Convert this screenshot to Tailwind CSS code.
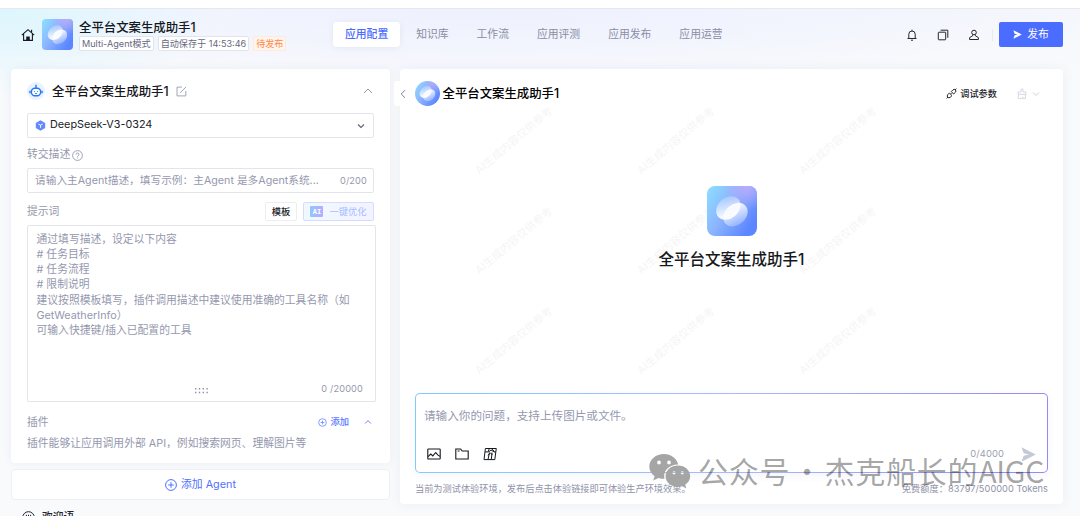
<!DOCTYPE html>
<html lang="zh-CN">
  <head>
    <meta charset="UTF-8" />
    <meta name="viewport" content="width=device-width, initial-scale=1.0" />
    <title>全平台文案生成助手1</title>
    <script src="https://cdn.jsdelivr.net/npm/@tailwindcss/browser@4"></script>
  </head>
  <body
    class="h-[516px] overflow-hidden flex flex-col bg-[#f8f9fc] font-[Inter,'Noto_Sans_CJK_SC',sans-serif] text-[10.8px] leading-4 text-[#9598ae]"
  >
    <!-- Shared gradients and the app logo -->
    <svg class="absolute w-0 h-0" aria-hidden="true">
      <defs>
        <linearGradient id="logoBase" x1="0" y1="0.1" x2="1" y2="0.7">
          <stop offset="0" stop-color="#8cdcff" />
          <stop offset="0.45" stop-color="#8bb3fe" />
          <stop offset="0.95" stop-color="#5b86ff" />
        </linearGradient>
        <radialGradient id="logoGlow" cx="0.8" cy="0" r="0.48">
          <stop offset="0" stop-color="#b9abfb" />
          <stop offset="1" stop-color="#b9abfb" stop-opacity="0" />
        </radialGradient>
        <linearGradient id="logoLeft" x1="0.8" y1="0" x2="0.2" y2="1">
          <stop offset="0" stop-color="#fff" stop-opacity="0.15" />
          <stop offset="0.75" stop-color="#fff" stop-opacity="0.9" />
        </linearGradient>
        <linearGradient id="logoRight" x1="0.8" y1="0" x2="0.2" y2="1">
          <stop offset="0.1" stop-color="#fff" stop-opacity="0.9" />
          <stop offset="1" stop-color="#fff" stop-opacity="0.2" />
        </linearGradient>
      </defs>
      <symbol id="logo" viewBox="0 0 50 50">
        <rect width="50" height="50" fill="url(#logoBase)" />
        <rect width="50" height="50" fill="url(#logoGlow)" />
        <ellipse cx="21.3" cy="22" rx="13.5" ry="10.3" transform="rotate(-42 21.3 22)" fill="url(#logoLeft)" />
        <ellipse cx="28.5" cy="28.700" rx="13.5" ry="10.3" transform="rotate(-42 28.5 28.7)" fill="url(#logoRight)" />
      </symbol>
    </svg>

    <div class="h-[9px] shrink-0 bg-white border-b-[1.5px] border-[#e6e8ed]"></div>

    <div
      class="flex-1 min-h-0 flex flex-col bg-[radial-gradient(ellipse_220px_90px_at_0_0,#dcf6fd,transparent),radial-gradient(ellipse_620px_75px_at_45%_0,#eef1fe,transparent),linear-gradient(#f5f7fd,#f9fafc_60px)]"
    >
      <!-- Header -->
      <header class="h-[60px] shrink-0 flex items-start pl-[21px] pr-[17px]">
        <div class="w-[312px] flex items-center pt-[9px]">
          <svg class="w-[14px] h-[14px] mr-[7px] text-[#16181d]" viewBox="0 0 14 14" fill="none" stroke="currentColor" stroke-width="1.1">
            <path d="M0.8 7.2 7 1.7l6.2 5.5M2.6 6v6.4h8.8V6" />
            <path d="M5.8 12.2V9h2.4v3.2z" fill="currentColor" />
            <path d="M10.6 1.8v2.4" />
          </svg>
          <svg class="size-[31px] rounded-[4px]"><use href="#logo" /></svg>
          <div class="ml-[6px]">
            <h1 class="pt-px text-[12.4px] leading-[17px] font-medium text-[#16181d]">
              全平台文案生成助手1
            </h1>
            <div class="flex gap-1 text-[9.1px] leading-[13px] text-[#666a80] whitespace-nowrap">
              <span class="px-[2px] bg-white border border-[#e1e3ee] rounded-[2px]">Multi-Agent模式</span>
              <span class="px-[2px] bg-white border border-[#e1e3ee] rounded-[2px]">自动保存于 14:53:46</span>
              <span class="px-[2px] bg-[#fff5ec] border border-[#ffeadb] rounded-[2px] text-[#ff8748]">待发布</span>
            </div>
          </div>
        </div>
        <nav class="flex gap-1 pt-[13px] leading-[24px] text-[#8a8da5]">
          <a class="px-3 pt-px bg-white rounded-[4px] shadow-[0_1px_6px_rgba(80,90,140,0.09)] font-medium text-[#4a6bff]">应用配置</a>
          <a class="px-3 pt-px">知识库</a>
          <a class="px-3 pt-px">工作流</a>
          <a class="px-3 pt-px">应用评测</a>
          <a class="px-3 pt-px">应用发布</a>
          <a class="px-3 pt-px">应用运营</a>
        </nav>
        <div class="ml-auto flex items-center pt-[13px] text-[#25272e]">
          <svg class="size-3" viewBox="0 0 12 12" fill="none" stroke="currentColor">
            <path d="M1.5 9.5h9M2.8 9.3V5.2a3.2 3.2 0 0 1 6.4 0v4.1M6 0.7v1.2M5 11.2h2" />
          </svg>
          <svg class="size-3 ml-[19px]" viewBox="0 0 12 12" fill="none" stroke="currentColor">
            <rect x="1.3" y="3.2" width="7.4" height="7.6" rx="0.6" />
            <path d="M3.6 1.2h7.2v7.6" />
          </svg>
          <svg class="size-3 ml-[19px]" viewBox="0 0 12 12" fill="none" stroke="currentColor">
            <circle cx="6" cy="3.5" r="2.3" />
            <path d="M4.6 5.6v1.2L1.6 8.600v1.900h8.800V8.600l-3-1.800V5.600" />
          </svg>
          <div class="w-px h-3 bg-[#e7e9f1] ml-3 mr-[6px]"></div>
          <button class="w-[64px] h-[25px] flex items-center justify-center gap-[5px] rounded-[2px] bg-[#4a6cff] text-white">
            <svg class="w-[9px] h-[9px]" viewBox="0 0 9 9" fill="currentColor">
              <path d="M0.4 0.3 8.8 4.5 0.4 8.7 1.6 5.2 4.6 4.5 1.6 3.8z" />
            </svg>
            <span class="pt-px">发布</span>
          </button>
        </div>
      </header>

      <main class="flex-1 min-h-0 flex gap-[10px] pl-[11px] pr-[17px]">
        <!-- Agent settings -->
        <div class="w-[379px] shrink-0 flex flex-col">
          <section class="h-[394px] shrink-0 bg-white rounded-[4px] shadow-[0_0_10px_rgba(80,90,140,0.08)] pl-4 pr-[15px]">
            <div class="h-[44px] flex items-center">
              <span class="size-[18px] rounded-full bg-[#e9f2ff] flex items-center justify-center">
                <svg class="size-[14px]" viewBox="0 0 14 14" fill="none" stroke="#2478f5" stroke-width="1.4">
                  <rect x="2.4" y="4.3" width="9.2" height="7.4" rx="3.5" fill="#fff" />
                  <path d="M7 4.2V1.4M1 6.7v2.6M13 6.7v2.6" />
                  <path d="M4.9 7.5h1M8.1 7.5h1M5.9 9.3q1.1.8 2.2 0" stroke-width="0.9" />
                  <circle cx="7" cy="1.3" r="0.7" fill="#2478f5" stroke="none" />
                </svg>
              </span>
              <h2 class="ml-[7px] pt-px text-[12.4px] font-medium text-[#16181d]">全平台文案生成助手1</h2>
              <svg class="size-[11px] ml-[7px]" viewBox="0 0 11 11" fill="none" stroke="#a2a5b8">
                <path d="M6 1.1H1v8.8h8.8V5M4.2 6.8 10 1" />
              </svg>
              <svg class="size-[10px] ml-auto mr-[2px]" viewBox="0 0 10 10" fill="none" stroke="#9699ae">
                <path d="M1.1 7 5 3l3.9 4" />
              </svg>
            </div>
            <div class="w-[347px] h-[25px] flex items-center px-[7px] border border-[#e4e5ea] rounded-[2px] text-[#202228]">
              <svg class="size-[11px] mr-1" viewBox="0 0 11 11">
                <path d="M5.5 0.3 10.2 2.9v5.2L5.5 10.7 0.8 8.1V2.9z" fill="#6389fb" />
                <path d="M3.300 4 5.5 5.2 7.700 4M5.5 5.2v2.600" fill="none" stroke="#fff" stroke-width="0.9" />
              </svg>
              <span class="pb-px text-[10.8px]">DeepSeek-V3-0324</span>
              <svg class="size-2 ml-auto mr-px" viewBox="0 0 8 8" fill="none" stroke="#5d6070" stroke-width="1.1">
                <path d="M1 2.5l3 3 3-3" />
              </svg>
            </div>
            <div class="h-[30px] pt-[4px] flex items-center gap-[2px]">
              转交描述
              <svg class="size-[11px]" viewBox="0 0 11 11" fill="none" stroke="currentColor" stroke-width="0.9">
                <circle cx="5.5" cy="5.5" r="4.9" />
                <path d="M4 4.5a1.5 1.5 0 1 1 2.2 1.3Q5.5 6.1 5.5 6.8M5.5 7.5v.9" />
              </svg>
            </div>
            <div class="w-[347px] h-[25px] flex items-center pl-[7px] pr-[6px] pt-px border border-[#e4e5ea] rounded-[2px] whitespace-nowrap">
              <span class="text-[10.7px]">请输入主Agent描述，填写示例：主Agent 是多Agent系统...</span>
              <span class="ml-auto text-[9.2px] tracking-[0.15px]">0/200</span>
            </div>
            <div class="w-[347px] h-8 pt-[5px] flex items-center">
              <span class="pt-px">提示词</span>
              <button class="ml-auto w-8 h-[19px] leading-[17px] text-center border border-[#eceef3] rounded-[2px] text-[9.3px] font-medium text-[#202228]">模板</button>
              <button class="ml-[6px] w-[71px] h-[19px] flex items-center justify-center gap-[6px] border border-[#d5dcff] rounded-[2px] bg-linear-to-r from-[#f0f8ff] to-[#f3f3ff] text-[9.3px] text-[#a6bdff]">
                <span class="w-[13px] h-[11px] rounded-[1px] bg-linear-to-r from-[#91c5ff] to-[#b3acff] font-['Liberation_Mono'] text-[7px] leading-[12px] font-bold text-white">AI</span>
                一键优化
              </button>
            </div>
            <div class="relative w-[349px] h-[177px] pt-[6px] px-[8.5px] border border-[#e4e5ea] rounded-[2px] leading-[15.15px] whitespace-nowrap">
              通过填写描述，设定以下内容<br />
              # 任务目标<br />
              # 任务流程<br />
              # 限制说明<br />
              建议按照模板填写，插件调用描述中建议使用准确的工具名称（如<br />
              GetWeatherInfo）<br />
              可输入快捷键/插入已配置的工具
              <svg class="absolute left-[167px] bottom-[7px] w-[13px] h-[6px]" viewBox="0 0 13 6" fill="#8f92a6">
                <path d="M0 0h1.4v1.4H0zM3.8 0h1.4v1.4H3.8zM7.6 0H9v1.4H7.6zM11.4 0h1.4v1.4h-1.4zM0 3.8h1.4v1.4H0zM3.8 3.8h1.4v1.4H3.8zM7.6 3.8H9v1.4H7.6zM11.4 3.8h1.4v1.4h-1.4z" />
              </svg>
              <span class="absolute right-3 bottom-[5px] text-[9.2px] tracking-[0.15px]">0 /20000</span>
            </div>
            <div class="flex items-center h-4 mt-3">
              <span class="pt-px">插件</span>
              <svg class="size-[9px] ml-auto mr-[3px]" viewBox="0 0 9 9" fill="none" stroke="#6a86ff" stroke-width="0.8">
                <circle cx="4.5" cy="4.5" r="3.8" />
                <path d="M4.5 2.6v3.8M2.6 4.5h3.8" />
              </svg>
              <span class="text-[9.3px] font-medium text-[#5b78ff]">添加</span>
              <svg class="size-2 ml-[15px] mr-[3px]" viewBox="0 0 8 8" fill="none" stroke="#6a86ff">
                <path d="M1.2 5.5 4 2.6l2.8 2.9" />
              </svg>
            </div>
            <p class="mt-[6px]">插件能够让应用调用外部 API，例如搜索网页、理解图片等</p>
          </section>

          <button class="mt-[6px] h-[31px] shrink-0 flex items-center justify-center gap-1 bg-white border border-[#eff0f5] rounded-[4px] text-[#4f70ff]">
            <svg class="size-3" viewBox="0 0 12 12" fill="none" stroke="currentColor">
              <circle cx="6" cy="6" r="5.4" />
              <path d="M6 3.2v5.6M3.2 6h5.6" />
            </svg>
            <span>添加 Agent</span>
          </button>

          <div class="mt-[8px] h-[18px] shrink-0 flex items-center pl-[11px] pr-[15px] text-[#202228]">
            <svg class="size-[13px]" viewBox="0 0 13 13" fill="none" stroke="currentColor">
              <circle cx="6.5" cy="6.5" r="5.8" />
              <path d="M4.4 3.8v1.4M6.5 3.8v1.4M8.6 3.8v1.4M3.8 7.6q2.7 3 5.4 0" />
            </svg>
            <span class="ml-[7px] mt-[2px] text-[10.8px] font-medium">欢迎语</span>
            <svg class="size-[10px] ml-auto mt-[3px]" viewBox="0 0 10 10" fill="none" stroke="#9699ae">
              <path d="M1.1 3 5 7l3.9-4" />
            </svg>
          </div>
        </div>

        <!-- Chat preview -->
        <section class="relative flex-1 h-[435px] flex flex-col bg-white rounded-[4px] shadow-[0_0_12px_rgba(80,90,140,0.08)] px-[15px]">
          <button class="absolute -left-[6px] top-3 w-3 h-[25px] flex items-center justify-center bg-white rounded-[3px]">
            <svg class="w-[6px] h-[10px] ml-[6px]" viewBox="0 0 6 10" fill="none" stroke="#7f8296">
              <path d="M5 1.2 1.2 5 5 8.8" />
            </svg>
          </button>

          <!-- Tiled watermark behind the conversation -->
          <div class="absolute left-[33px] top-[22px] grid grid-cols-[repeat(3,162.3px)] auto-rows-[100px] place-items-center text-[10.8px] text-[#f5f5f6] whitespace-nowrap">
            <span class="-rotate-40">AI生成内容仅供参考</span>
            <span class="-rotate-40">AI生成内容仅供参考</span>
            <span class="-rotate-40">AI生成内容仅供参考</span>
            <span class="-rotate-40">AI生成内容仅供参考</span>
            <span class="-rotate-40">AI生成内容仅供参考</span>
            <span class="-rotate-40">AI生成内容仅供参考</span>
            <span class="-rotate-40">AI生成内容仅供参考</span>
            <span class="-rotate-40">AI生成内容仅供参考</span>
            <span class="-rotate-40">AI生成内容仅供参考</span>
          </div>

          <div class="h-[49px] shrink-0 flex items-center">
            <svg class="size-[25px] rounded-full"><use href="#logo" /></svg>
            <h2 class="ml-[2.5px] pt-px text-[12.4px] font-medium text-black">全平台文案生成助手1</h2>
            <svg class="size-[11px] ml-auto mr-[3px]" viewBox="0 0 11 11" fill="none" stroke="#25272e">
              <path d="M0.6 10.4 2 9M9 2l1.4-1.4M5.3 3.5 7 1.8a1.8 1.8 0 0 1 2.4.1 1.8 1.8 0 0 1 0 2.4L7.6 6zM3.4 5 1.7 6.8a1.8 1.8 0 0 0 0 2.4 1.8 1.8 0 0 0 2.5.1L6 7.6zM4.5 6.1l1-1" />
            </svg>
            <span class="text-[9.2px] font-medium text-[#25272e]">调试参数</span>
            <svg class="w-[10px] h-[11px] ml-5" viewBox="0 0 10 11" fill="none" stroke="#d6d8e2">
              <path d="M4 4V1.3q1-1 2 0V4h3v2.4H1V4h3M1.7 6.6 1 10.4h7.6l-.4-3.8M5.9 8.6v1.8" />
            </svg>
            <svg class="size-2 ml-[5px] mr-2" viewBox="0 0 8 8" fill="none" stroke="#d0d2de">
              <path d="M1 2.5l3 3 3-3" />
            </svg>
          </div>

          <div class="relative flex-1 flex flex-col items-center pt-[68px]">
            <svg class="size-[50px] rounded-[8px]"><use href="#logo" /></svg>
            <h3 class="mt-3 text-[15.5px] leading-6 font-medium text-[#16181d]">全平台文案生成助手1</h3>
          </div>

          <div class="relative h-[80px] mb-[31px] shrink-0 rounded-[5px] p-px bg-linear-to-r from-[#7fcbfa] via-[#a9b9fb] to-[#9488f6] shadow-[0_3px_8px_rgba(80,100,180,0.06)]">
            <div class="h-full bg-white rounded-[4px] px-2 pt-[14px] flex flex-col">
              <p class="text-[11.6px]">请输入你的问题，支持上传图片或文件。</p>
              <div class="flex items-center mt-[22px] pl-[3px] text-[#16181d]">
                <svg class="size-[14px] mr-[14px]" viewBox="0 0 14 14" fill="none" stroke="currentColor" stroke-width="1.1">
                  <rect x="0.8" y="2" width="12.4" height="10" rx="0.6" />
                  <path d="M1 9.6 3.8 7l2 1.9 2.9-3.4 2 2.4L13 9.4" />
                </svg>
                <svg class="size-[14px] mr-[14px]" viewBox="0 0 14 14" fill="none" stroke="currentColor" stroke-width="1.1">
                  <path d="M0.8 12V2h4.8l1.6 2h6v8zM2.6 4h2" />
                </svg>
                <svg class="size-[14px]" viewBox="0 0 14 14" fill="none" stroke="currentColor">
                  <path d="M2.400 1.500h10.900l-.5 3.400-1 7.700H1zM2 4.900h3.200l1-3.200M5.500 5 8 3l3.500 2h1.300M8.500 1.600l3 3M6.500 5.500 5 12.500M9 5.500 8.300 12.500M4.800 8.300 7.500 6l2 2" />
                </svg>
                <span class="ml-auto text-[9.4px] tracking-[0.1px] text-[#9b9eb2]">0/4000</span>
                <svg class="w-[15px] h-[15px] ml-[17px] mr-[3px]" viewBox="0 0 15 15" fill="#c6c8d6">
                  <path d="M0.5 0.2 14.8 7.5 0.5 14.8 2.7 8.7 8 7.5 2.7 6.3z" />
                </svg>
              </div>
            </div>
          </div>
          <div class="absolute left-[15px] right-[15px] bottom-[7px] flex justify-between text-[9.2px] text-[#8f92a8]">
            <span>当前为测试体验环境，发布后点击体验链接即可体验生产环境效果。</span>
            <span class="tracking-[0.06px]">免费额度：83797/500000 Tokens</span>
          </div>
        </section>
      </main>
    </div>

    <!-- Account signature over the page -->
    <div class="absolute left-[649px] top-[450px] flex items-center text-black/37 whitespace-nowrap">
      <svg class="w-[42px] h-[40px]" viewBox="0 0 42 40" fill="#a5a5a5">
        <path fill-rule="evenodd" d="M15 4C6.800 4 0.300 9.500 0.300 16.600c0 4 2.100 7.400 5.300 9.700L4.200 30.600l5.200-2.700c1.800.5 3.600.9 6 .9C13.700 21 20 14.500 29.200 14.600 27.800 8.300 22 4 15 4zM10 10.600a1.900 1.900 0 1 1 0 3.800 1.900 1.900 0 0 1 0-3.800zM20 10.600a1.900 1.900 0 1 1 0 3.800 1.900 1.900 0 0 1 0-3.800z" />
        <path fill-rule="evenodd" d="M29 15.600c-7 0-12.400 4.700-12.400 10.700S22 37 29 37c1.500 0 2.900-.3 4.300-.7l4 2.200-1.100-3.700c3-2.200 5-5 5-8.500 0-6-5.500-10.700-12.200-10.700zM25 21.200a1.600 1.600 0 1 1 0 3.200 1.600 1.600 0 0 1 0-3.200zM33.300 21.200a1.600 1.600 0 1 1 0 3.200 1.600 1.600 0 0 1 0-3.200z" />
      </svg>
      <div class="ml-[7px] flex font-['Noto_Sans_CJK_SC',sans-serif] text-[30px] leading-10 tracking-[0.8px]">
        <span>公众号</span>
        <span class="w-[34px] flex justify-center">·</span>
        <span>杰克船长的<span class="tracking-[-0.3px]">AIGC</span></span>
      </div>
    </div>
  </body>
</html>
